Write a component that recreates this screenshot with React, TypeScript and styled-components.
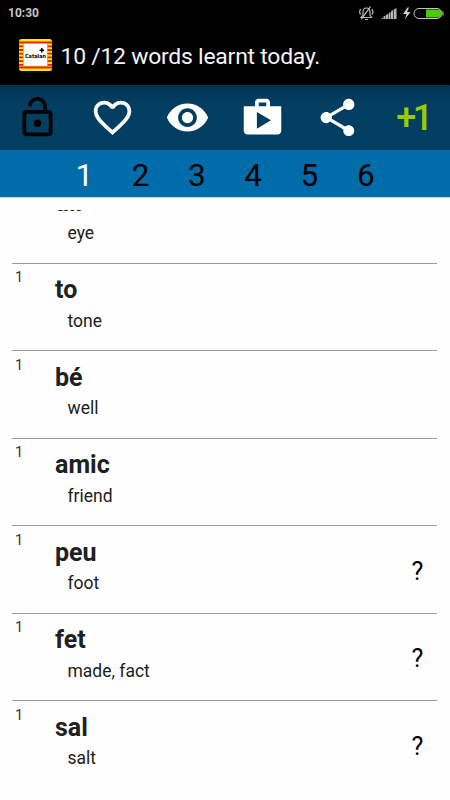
import React from 'react';
import styled, { createGlobalStyle } from 'styled-components';

const GlobalStyle = createGlobalStyle`
  * { box-sizing: border-box; }
  body { margin: 0; background: #fff; font-family: Roboto, 'Liberation Sans', sans-serif; }
`;

const Screen = styled.div`
  width: 450px;
  height: 800px;
  display: flex;
  flex-direction: column;
  overflow: hidden;
  background: #fefefe;
`;

const StatusBar = styled.div`
  height: 25px;
  flex: none;
  display: flex;
  align-items: center;
  justify-content: space-between;
  padding: 1px 5px 0 8px;
  background: #000;
  color: #c6c6c6;
  font-size: 12px;
  font-weight: 700;
  line-height: 14px;
  svg { display: block; }
`;

const Header = styled.header`
  height: 60px;
  flex: none;
  display: flex;
  align-items: center;
  gap: 8.5px;
  padding: 0 19px;
  background: #000;
  svg { display: block; flex: none; }
`;

const Title = styled.h1`
  margin: 4px 0 0;
  color: #f5f5f5;
  font-size: 22.9px;
  letter-spacing: -0.22px;
  line-height: 28px;
  font-weight: 400;
  white-space: nowrap;
`;

const Toolbar = styled.nav`
  height: 65px;
  flex: none;
  display: grid;
  grid-template-columns: repeat(6, 75px);
  background: linear-gradient(#003552, #023e61 18px);
`;

const ToolButton = styled.button<{ $color: string }>`
  border: 0;
  padding: 0;
  background: none;
  display: flex;
  align-items: center;
  justify-content: center;
  color: ${(p) => p.$color};
  svg { display: block; }
`;

const PlusOne = styled.span`
  padding-left: 1px;
  font-family: Roboto, sans-serif;
  font-size: 36px;
  line-height: 42px;
  font-weight: 500;
  letter-spacing: -3.5px;
`;

const Tabs = styled.nav`
  height: 47px;
  flex: none;
  display: flex;
  justify-content: center;
  padding-top: 7px;
  background: #006ca9;
  box-shadow: 0 1px 0 #c9dcea;
`;

const Tab = styled.span<{ $active: boolean }>`
  width: 56.3px;
  text-align: center;
  font-size: 31.5px;
  line-height: 37px;
  color: ${(p) => (p.$active ? '#fff' : '#000')};
`;

const List = styled.main`
  flex: 1;
  min-height: 0;
  margin: 13px 13px 11.5px 12px;
  overflow: hidden;
  display: flex;
  flex-direction: column;
  justify-content: flex-end;
`;

const Row = styled.article`
  height: 87.5px;
  flex: none;
  display: grid;
  grid-template-columns: 43px 1fr 39px;
  border-bottom: 1px solid #9b9b9b;
  &:last-child { border-color: transparent; }
`;

const Level = styled.span`
  padding: 5.5px 0 0 3px;
  font-size: 14.5px;
  line-height: 18px;
  color: #333;
`;

const Word = styled.div`
  padding-top: 11.5px;
  font-size: 25px;
  line-height: 30px;
  font-weight: 700;
  color: #202020;
`;

const Meaning = styled.div`
  padding: 5.5px 0 0 12.5px;
  font-size: 17.5px;
  line-height: 20px;
  color: #1c1c1c;
`;

const Mark = styled.span`
  padding-top: 30.5px;
  text-align: center;
  font-size: 25px;
  line-height: 30px;
  color: #000;
`;

const icons = [
  {
    name: 'Unlock',
    color: '#000',
    d: 'M12 17c1.1 0 2-.9 2-2s-.9-2-2-2-2 .9-2 2 .9 2 2 2zm6-9h-1V6c0-2.76-2.24-5-5-5S7 3.24 7 6h1.9c0-1.71 1.39-3.1 3.1-3.1 1.71 0 3.1 1.39 3.1 3.1v2H6c-1.1 0-2 .9-2 2v10c0 1.1.9 2 2 2h12c1.1 0 2-.9 2-2V10c0-1.1-.9-2-2-2zm0 12H6V10h12v10z',
  },
  {
    name: 'Favourites',
    color: '#fff',
    d: 'M16.5 3c-1.74 0-3.41.81-4.5 2.09C10.91 3.81 9.24 3 7.5 3 4.42 3 2 5.42 2 8.5c0 3.78 3.4 6.86 8.55 11.54L12 21.35l1.45-1.32C18.6 15.36 22 12.28 22 8.5 22 5.42 19.58 3 16.5 3zm-4.4 15.55l-.1.1-.1-.1C7.14 14.24 4 11.39 4 8.5 4 6.5 5.5 5 7.5 5c1.54 0 3.04.99 3.57 2.36h1.87C13.46 5.99 14.96 5 16.5 5c2 0 3.5 1.5 3.5 3.5 0 2.89-3.14 5.74-7.9 10.05z',
  },
  {
    name: 'Show',
    color: '#fff',
    d: 'M12 4.5C7 4.5 2.73 7.61 1 12c1.73 4.39 6 7.5 11 7.5s9.27-3.11 11-7.5c-1.73-4.39-6-7.5-11-7.5zM12 17c-2.76 0-5-2.24-5-5s2.24-5 5-5 5 2.24 5 5-2.24 5-5 5zm0-8c-1.66 0-3 1.34-3 3s1.34 3 3 3 3-1.34 3-3-1.34-3-3-3z',
  },
  {
    name: 'Store',
    color: '#fff',
    d: 'M16 6V4c0-1.11-.89-2-2-2h-4c-1.11 0-2 .89-2 2v2H2v13c0 1.11.89 2 2 2h16c1.11 0 2-.89 2-2V6h-6zm-6-2h4v2h-4V4zM9 18V9l7.5 4.5L9 18z',
  },
  {
    name: 'Share',
    color: '#fff',
    d: 'M18 16.08c-.76 0-1.44.3-1.96.77L8.91 12.7c.05-.23.09-.46.09-.7s-.04-.47-.09-.7l7.05-4.11c.54.5 1.25.81 2.04.81 1.66 0 3-1.34 3-3s-1.34-3-3-3-3 1.34-3 3c0 .24.04.47.09.7L8.04 9.81C7.5 9.31 6.79 9 6 9c-1.66 0-3 1.34-3 3s1.34 3 3 3c.79 0 1.5-.31 2.04-.81l7.12 4.16c-.05.21-.08.43-.08.65 0 1.61 1.31 2.92 2.92 2.92 1.61 0 2.92-1.31 2.92-2.92s-1.31-2.92-2.92-2.92z',
  },
];

const words = [
  { word: 'ull', meaning: 'eye', unknown: false },
  { word: 'to', meaning: 'tone', unknown: false },
  { word: 'bé', meaning: 'well', unknown: false },
  { word: 'amic', meaning: 'friend', unknown: false },
  { word: 'peu', meaning: 'foot', unknown: true },
  { word: 'fet', meaning: 'made, fact', unknown: true },
  { word: 'sal', meaning: 'salt', unknown: true },
];

const SystemIcons = () => (
  <svg width="87" height="16" viewBox="0 0 87 16">
    <g fill="none" stroke="#b5b5b5" strokeWidth="1.2">
      <path d="M3 12.5h10.5L12 10V7c0-2.5-1.4-4-3.5-4S5 4.500 5 7v3z" />
      <path d="M3.500 14L12.500 1.500" stroke="#d0d0d0" />
      <path d="M7 14.500h3M2.500 4L1.500 7l1 2.500M14 4l1 3-1 2.500" />
    </g>
    <path d="M23 14l2-1.500V14zM25.500 14v-2.500l2-1V14zM28 14v-4l2-1v5zM30.500 14V8.500l2-1.500v7zM33 14V6.500l2-1.500v9zM35.700 14V4.800L38.500 3v11z" fill="#b8b8b8" />
    <path d="M49.500 2.500L45 9h3.500l-1.500 5 5.500-7H49l2-4.500z" fill="#d0d0d0" />
    <path d="M68 4.500h11.500a4 4 0 010 8H68z" fill="#4cc90a" />
    <rect x="56" y="3.500" width="28" height="10" rx="5" fill="none" stroke="#c4c4c4" strokeWidth="1" />
    <path d="M85 6.500v4" stroke="#c4c4c4" />
  </svg>
);

const AppLogo = () => (
  <svg width="33" height="32" viewBox="0 0 33 32">
    <defs>
      <clipPath id="badge"><rect width="33" height="32" rx="2.500" /></clipPath>
    </defs>
    <g clipPath="url(#badge)">
      <rect width="33" height="32" fill="#fce900" />
      <path d="M0 3.500h33M0 7.300h33M0 11h33M0 14.700h33M0 18.400h33M0 22.100h33M0 25.800h33M0 28.500h33" stroke="#ed1c24" strokeWidth="1.800" />
    </g>
    <rect x="4.300" y="4.300" width="24.200" height="22.700" fill="#fff" stroke="#a66" strokeWidth=".4" />
    <path d="M20.500 11.200h4.600M22.800 8.900v4.600" stroke="#000" strokeWidth="1.500" />
    <text x="16.500" y="19.400" textAnchor="middle" textLength="21" lengthAdjust="spacingAndGlyphs" fontFamily="DejaVu Sans, sans-serif" fontWeight="700" fontSize="5.300">Catalan</text>
  </svg>
);

export default function App() {
  return (
    <Screen>
      <GlobalStyle />
      <StatusBar><span>10:30</span><SystemIcons /></StatusBar>
      <Header><AppLogo /><Title>10 /12 words learnt today.</Title></Header>
      <Toolbar>
        {icons.map((icon) => (
          <ToolButton key={icon.name} aria-label={icon.name} $color={icon.color}>
            <svg width="45" height="45" viewBox="0 0 24 24" fill="currentColor"><path d={icon.d} /></svg>
          </ToolButton>
        ))}
        <ToolButton $color="#99cc00"><PlusOne>+1</PlusOne></ToolButton>
      </Toolbar>
      <Tabs>
        {[1, 2, 3, 4, 5, 6].map((n) => <Tab key={n} $active={n === 1}>{n}</Tab>)}
      </Tabs>
      <List>
        {words.map((item) => (
          <Row key={item.word}>
            <Level>1</Level>
            <div>
              <Word>{item.word}</Word>
              <Meaning>{item.meaning}</Meaning>
            </div>
            <Mark>{item.unknown ? '?' : ''}</Mark>
          </Row>
        ))}
      </List>
    </Screen>
  );
}
